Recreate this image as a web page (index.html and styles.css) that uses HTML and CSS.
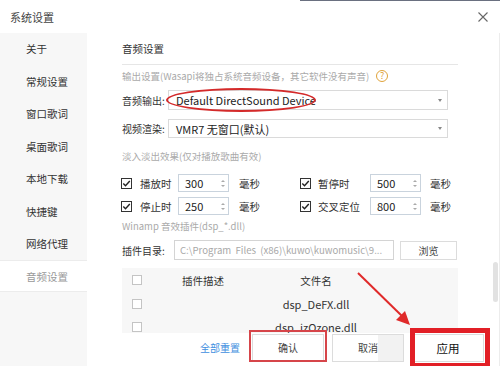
FILE: index.html
```html
<!DOCTYPE html>
<html lang="zh-CN">
<head>
<meta charset="utf-8">
<title>系统设置</title>
<link rel="stylesheet" href="styles.css">
</head>
<body>
<div class="topstrip"></div>
<header class="titlebar">
  <span class="title">系统设置</span>
  <svg class="close" width="10" height="10" viewBox="0 0 10 10"><path d="M0.5 0.5 L9.5 9.5 M9.5 0.5 L0.5 9.5" stroke="#666" stroke-width="1.1" fill="none"/></svg>
</header>
<div class="main">
  <nav class="sidebar">
    <div class="nav-item">关于</div>
    <div class="nav-item">常规设置</div>
    <div class="nav-item">窗口歌词</div>
    <div class="nav-item">桌面歌词</div>
    <div class="nav-item">本地下载</div>
    <div class="nav-item">快捷键</div>
    <div class="nav-item">网络代理</div>
    <div class="nav-item active">音频设置</div>
  </nav>
  <div class="panel">
    <div class="scroll">
      <div class="content">
        <div class="heading">音频设置</div>
        <div class="hint">输出设置(Wasapi将独占系统音频设备，其它软件没有声音)
          <span class="help">?</span>
        </div>
        <div class="field">
          <span class="label">音频输出:</span>
          <div class="select"><span>Default DirectSound Device</span><i class="caret"></i></div>
        </div>
        <div class="field field2">
          <span class="label">视频渲染:</span>
          <div class="select"><span>VMR7 无窗口(默认)</span><i class="caret"></i></div>
        </div>
        <div class="hint hint-tall">淡入淡出效果(仅对播放歌曲有效)</div>
        <div class="fade">
          <svg class="cb" viewBox="0 0 11 11"><rect x="0.5" y="0.5" width="10" height="10" fill="#fff" stroke="#333"/><path d="M2.3 5.6 L4.5 7.8 L8.8 3" stroke="#222" stroke-width="1.4" fill="none"/></svg>
          <span class="flabel">播放时</span>
          <div class="spin"><span>300</span><i class="arrows"><b class="up"></b><b class="down"></b></i></div>
          <span class="unit">毫秒</span>
          <svg class="cb" viewBox="0 0 11 11"><rect x="0.5" y="0.5" width="10" height="10" fill="#fff" stroke="#333"/><path d="M2.3 5.6 L4.5 7.8 L8.8 3" stroke="#222" stroke-width="1.4" fill="none"/></svg>
          <span class="flabel">暂停时</span>
          <div class="spin"><span>500</span><i class="arrows"><b class="up"></b><b class="down"></b></i></div>
          <span class="unit unit2">毫秒</span>

          <svg class="cb" viewBox="0 0 11 11"><rect x="0.5" y="0.5" width="10" height="10" fill="#fff" stroke="#333"/><path d="M2.3 5.6 L4.5 7.8 L8.8 3" stroke="#222" stroke-width="1.4" fill="none"/></svg>
          <span class="flabel">停止时</span>
          <div class="spin"><span>250</span><i class="arrows"><b class="up"></b><b class="down"></b></i></div>
          <span class="unit">毫秒</span>
          <svg class="cb" viewBox="0 0 11 11"><rect x="0.5" y="0.5" width="10" height="10" fill="#fff" stroke="#333"/><path d="M2.3 5.6 L4.5 7.8 L8.8 3" stroke="#222" stroke-width="1.4" fill="none"/></svg>
          <span class="flabel">交叉定位</span>
          <div class="spin"><span>800</span><i class="arrows"><b class="up"></b><b class="down"></b></i></div>
          <span class="unit unit2">毫秒</span>
        </div>
        <div class="hint">Winamp 音效插件(dsp_*.dll)</div>
        <div class="dir">
          <span class="label">插件目录:</span>
          <div class="input">C:\Program&nbsp; Files&nbsp; (x86)\kuwo\kuwomusic\9...</div>
          <div class="browse">浏览</div>
        </div>
        <div class="table">
          <div class="trow thead">
            <span class="tcb"></span><span class="tc">插件描述</span><span class="tc">文件名</span><span></span>
          </div>
          <div class="trow">
            <span class="tcb"></span><span class="tc"></span><span class="tc file">dsp_DeFX.dll</span><span></span>
          </div>
          <div class="trow">
            <span class="tcb"></span><span class="tc"></span><span class="tc file">dsp_izOzone.dll</span><span></span>
          </div>
        </div>
      </div>
      <div class="track"><div class="thumb"></div></div>
    </div>
    <footer class="footer">
      <span class="link">全部重置</span>
      <div class="btn">确认</div>
      <div class="btn cancel">取消</div>
      <div class="btn apply">应用</div>
    </footer>
  </div>
</div>

<div class="mark-ellipse"></div>
<div class="mark-ok"></div>
<div class="mark-apply"></div>
<svg class="mark-arrow" width="70" height="70" viewBox="0 0 70 70">
  <line x1="2" y1="2" x2="47" y2="46" stroke="#e02a2a" stroke-width="2"/>
  <polygon points="54,54 40,49 49,40" fill="#e02a2a"/>
</svg>
</body>
</html>
```

FILE: styles.css
```css
* { box-sizing: border-box; }
html, body { margin: 0; padding: 0; }
body {
  width: 500px;
  height: 366px;
  overflow: hidden;
  position: relative;
  background: #fff;
  font-family: "Noto Sans CJK SC", "Noto Sans", sans-serif;
  color: #333;
  font-size: 10.5px;
}
.topstrip {
  height: 1px;
  margin-left: 300px;
  background: #6a7080;
}
.titlebar {
  height: 32px;
  display: flex;
  align-items: center;
  justify-content: space-between;
  padding: 0 12px 0 10px;
}
.title { font-size: 11px; color: #444; }
.close { display: block; }

.main { display: flex; height: 333px; }
.sidebar {
  width: 87px;
  flex: none;
  background: #f7f7f7;
}
.nav-item {
  height: 32.5px;
  line-height: 32.5px;
  padding-left: 26px;
  font-size: 10.5px;
  color: #333;
}
.nav-item.active {
  background: #fff;
  color: #999;
  border-top: 1px solid #ececec;
  border-bottom: 1px solid #ececec;
  margin-top: -1px;
}

.panel { flex: 1; display: flex; flex-direction: column; border-right: 1px solid #ececec; }
.scroll { height: 300px; overflow: hidden; display: flex; padding-left: 35px; }
.content { width: 336px; flex: none; }
.track { margin-left: 35px; width: 5px; }
.thumb { margin-top: 229px; height: 40px; width: 5px; border-radius: 3px; background: #e2e2e2; }

.heading {
  height: 32px;
  line-height: 31px;
  font-size: 10.5px;
  border-bottom: 1px solid #e6e6e6;
}
.hint {
  height: 22px;
  line-height: 22px;
  font-size: 9.5px;
  color: #aaa;
  display: flex;
  align-items: center;
}
.hint-tall { height: 36px; line-height: 36px; }
.help {
  width: 12px; height: 12px;
  border: 1px solid #e0a33a;
  border-radius: 50%;
  color: #e0a33a;
  font-size: 9px;
  line-height: 10px;
  text-align: center;
  margin-left: 7px;
}
.field { display: flex; align-items: center; margin-top: 3px; height: 20px; }
.field2 { margin-top: 9px; height: 19px; }
.label { width: 46px; flex: none; font-size: 10px; }
.select {
  width: 280px;
  height: 100%;
  border: 1px solid #dadada;
  display: flex;
  align-items: center;
  justify-content: space-between;
  padding: 0 5px 0 7px;
  font-size: 11px;
  color: #222;
}
.caret {
  width: 0; height: 0;
  border-left: 2.5px solid transparent;
  border-right: 2.5px solid transparent;
  border-top: 3px solid #888;
}

.fade {
  display: grid;
  grid-template-columns: 18px 38px 51px 72px 17px 52px 51px auto;
  grid-auto-rows: 18px;
  row-gap: 5px;
  align-items: center;
}
.cb { width: 11px; height: 11px; display: block; margin-left: -1px; }
.flabel { font-size: 10.5px; }
.spin {
  height: 18px;
  border: 1px solid #c9d3dd;
  display: flex;
  align-items: center;
  justify-content: space-between;
  padding: 0 3px 0 6px;
  font-size: 11px;
  color: #222;
}
.arrows { display: flex; flex-direction: column; gap: 3px; }
.arrows b { display: block; width: 0; height: 0; border-left: 2px solid transparent; border-right: 2px solid transparent; }
.arrows .up { border-bottom: 2.5px solid #aaa; }
.arrows .down { border-top: 2.5px solid #aaa; }
.unit { padding-left: 10px; font-size: 10.5px; }
.unit2 { padding-left: 9px; }

.dir { display: flex; align-items: center; margin-top: 3px; height: 20px; }
.dir .label { width: 52px; }
.input {
  width: 220px;
  height: 20px;
  border: 1px solid #d4d4d4;
  padding-left: 5px;
  font-size: 9.6px;
  line-height: 18px;
  color: #a8a8a8;
  white-space: nowrap;
  overflow: hidden;
}
.browse {
  margin-left: 6px;
  width: 57px;
  height: 19px;
  border: 1px solid #dcdcdc;
  text-align: center;
  line-height: 17px;
  font-size: 10px;
  color: #444;
}

.table { margin-top: 8px; background: #f7f7f7; }
.trow {
  display: grid;
  grid-template-columns: 28px 106px 120px 1fr;
  height: 23px;
  align-items: center;
}
.thead { height: 24px; }
.tcb {
  width: 10px; height: 10px;
  margin-left: 10px;
  border: 1px solid #c4c4c4;
  background: #fff;
}
.tc { text-align: center; font-size: 10.5px; color: #333; }
.file { font-size: 11px; }

.footer {
  height: 33px;
  display: flex;
  align-items: center;
  justify-content: flex-end;
  padding: 0 15px 4px 0;
  gap: 8px;
  background: #fff;
}
.link { color: #3f8fe0; font-size: 10px; margin-right: 4px; }
.btn {
  width: 72px;
  height: 28px;
  border: 1px solid #dcdcdc;
  display: flex;
  align-items: center;
  justify-content: center;
  font-size: 10px;
  color: #444;
  background: #fff;
}
.cancel { background: linear-gradient(90deg, #fff 64%, #f2f2f2 64%); }
.apply { font-size: 11.5px; color: #111; }

/* annotation overlays */
.mark-ellipse {
  position: absolute;
  left: 166px; top: 88px;
  width: 150px; height: 24px;
  border: 2px solid #d42a2a;
  border-radius: 50%;
}
.mark-ok {
  position: absolute;
  left: 249px; top: 330px;
  width: 78px; height: 32px;
  border: 2px solid #d6454a;
}
.mark-apply {
  position: absolute;
  left: 410px; top: 328px;
  width: 80px; height: 40px;
  border: 5px solid #e21f26;
}
.mark-arrow {
  position: absolute;
  left: 356px; top: 271px;
}
```
